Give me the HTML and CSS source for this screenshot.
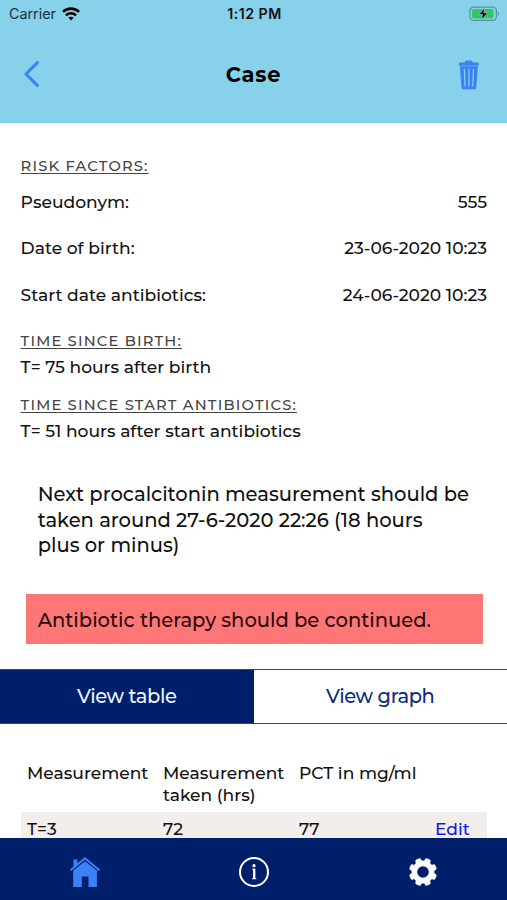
FILE: index.html
```html
<!DOCTYPE html>
<html lang="en">
<head>
    <meta charset="UTF-8">
    <meta name="viewport" content="width=device-width, initial-scale=1.0">
    <title>Case</title>
    <link rel="stylesheet" href="styles.css">
</head>
<body>
    <header class="header">
        <div class="status-bar">
            <div class="carrier">
                <span>Carrier</span>
                <svg class="wifi" viewBox="0 0 18 14" width="18" height="14">
                    <path d="M0.9 4.9 C5.5 0.4 12.5 0.4 17.1 4.9" fill="none" stroke="#000" stroke-width="2.7"/>
                    <path d="M3.9 8.3 C6.8 5.6 11.2 5.6 14.1 8.3" fill="none" stroke="#000" stroke-width="2.4"/>
                    <path d="M9 13.4 L6.3 10.6 C7.8 9.3 10.2 9.3 11.7 10.6 Z" fill="#000"/>
                </svg>
            </div>
            <span class="time">1:12 PM</span>
            <div class="battery">
                <svg viewBox="0 0 31 16" width="31" height="16">
                    <rect x="1" y="1.2" width="26.4" height="13.2" rx="3.6" fill="none" stroke="#5d91a6" stroke-width="1.2"/>
                    <path d="M28.8 5.5 C30.4 6.2 30.4 9.4 28.8 10.1 Z" fill="#5d91a6"/>
                    <rect x="3" y="3.1" width="21.4" height="9.4" rx="2" fill="#35c759"/>
                    <path d="M15.8 1.8 L9.6 8.6 H13.5 L12.4 13.8 L18.8 6.9 H14.8 Z" fill="#000" stroke="#87d1eb" stroke-width="0.7"/>
                </svg>
            </div>
        </div>
        <div class="title-bar">
            <a class="back" href="#" aria-label="Back">
                <svg viewBox="0 0 16 26" width="16" height="26">
                    <path d="M13.3 1.7 L2 13 L13.3 24.3" fill="none" stroke="#3b82f8" stroke-width="3.1" stroke-linecap="round" stroke-linejoin="round"/>
                </svg>
            </a>
            <h1>Case</h1>
            <a class="trash" href="#" aria-label="Delete">
                <svg viewBox="0 0 22 30" width="22" height="30">
                    <path d="M1 3.2 Q1 2.6 1.8 2.6 H6.6 Q7 0.6 8.6 0.6 H13 Q14.6 0.6 15 2.6 H19.8 Q20.7 2.6 20.7 3.4 V5.8 H1 Z" fill="#3b82f8"/>
                    <path d="M1.8 6.3 H19.9 L18.2 28 Q18.1 29.3 16.7 29.3 H5 Q3.7 29.3 3.5 28 Z" fill="#3b82f8"/>
                    <path d="M6.3 9 L7.1 26 M10.9 9 V26 M15.5 9 L14.7 26" fill="none" stroke="#87d1eb" stroke-width="1.2" stroke-linecap="round"/>
                </svg>
            </a>
        </div>
    </header>

    <main class="content">
        <section class="details">
            <h2>RISK FACTORS:</h2>
            <div class="row">
                <span>Pseudonym:</span>
                <span>555</span>
            </div>
            <div class="row">
                <span>Date of birth:</span>
                <span>23-06-2020 10:23</span>
            </div>
            <div class="row">
                <span>Start date antibiotics:</span>
                <span>24-06-2020 10:23</span>
            </div>
            <div class="since">
                <h2>TIME SINCE BIRTH:</h2>
                <p>T= 75 hours after birth</p>
            </div>
            <div class="since">
                <h2>TIME SINCE START ANTIBIOTICS:</h2>
                <p>T= 51 hours after start antibiotics</p>
            </div>
        </section>

        <p class="next">Next procalcitonin measurement should be<br>taken around 27-6-2020 22:26 (18 hours<br>plus or minus)</p>
        <p class="alert">Antibiotic therapy should be continued.</p>

        <div class="tabs">
            <a class="tab active" href="#">View table</a>
            <a class="tab" href="#">View graph</a>
        </div>

        <div class="table">
            <div class="table-row table-head">
                <span>Measurement</span>
                <span>Measurement taken (hrs)</span>
                <span>PCT in mg/ml</span>
                <span></span>
            </div>
            <div class="table-row table-data">
                <span>T=3</span>
                <span>72</span>
                <span>77</span>
                <a href="#">Edit</a>
            </div>
        </div>
    </main>

    <nav class="bottom-nav">
        <a href="#" aria-label="Home">
            <svg viewBox="0 0 32 32" width="32" height="32">
                <path d="M4.5 3.5 H8.4 V8 L4.5 11.6 Z" fill="#3b82f8"/>
                <path d="M1.6 14.2 L16 2.3 L30.4 14.2" fill="none" stroke="#3b82f8" stroke-width="2"/>
                <path d="M4.2 14.6 L16 5.2 L27.9 14.6 V31 H19.5 V20.4 H12.8 V31 H4.2 Z" fill="#3b82f8"/>
            </svg>
        </a>
        <a href="#" aria-label="Information">
            <svg viewBox="0 0 32 32" width="32" height="32">
                <circle cx="16" cy="16" r="14" fill="none" stroke="#fff" stroke-width="2"/>
                <circle cx="16" cy="9.7" r="1.6" fill="#fff"/>
                <path d="M14.2 13.3 H17 M14 22.7 H18.3" fill="none" stroke="#fff" stroke-width="1.1"/>
                <path d="M16.2 12.8 V23" stroke="#fff" stroke-width="2.3"/>
            </svg>
        </a>
        <a href="#" aria-label="Settings">
            <svg viewBox="-16 -16 32 32" width="32" height="32">
                <g fill="#fff">
                    <circle r="11.4"/>
                    <rect x="-3.1" y="-14" width="6.2" height="28" rx="1.8" transform="rotate(22.5)"/>
                    <rect x="-3.1" y="-14" width="6.2" height="28" rx="1.8" transform="rotate(67.5)"/>
                    <rect x="-3.1" y="-14" width="6.2" height="28" rx="1.8" transform="rotate(112.5)"/>
                    <rect x="-3.1" y="-14" width="6.2" height="28" rx="1.8" transform="rotate(157.5)"/>
                </g>
                <circle r="5.8" fill="#001f6b"/>
            </svg>
        </a>
    </nav>
</body>
</html>
```
FILE: styles.css
```css
* {
    box-sizing: border-box;
}
body {
    display: flex;
    flex-direction: column;
    height: 900px;
    margin: 0;
    overflow: hidden;
    background-color: #fff;
    color: #111;
    font-family: Montserrat, Inter, "Liberation Sans", sans-serif;
    font-size: 17.1px;
    font-weight: 500;
}
h1, h2, p {
    margin: 0;
}
a {
    text-decoration: none;
}
svg {
    display: block;
}

/* header */
.header {
    flex: none;
    height: 123px;
    background-color: #87d1eb;
    border-bottom: 1px solid #7fc8e3;
}
.status-bar {
    display: grid;
    grid-template-columns: 1fr auto 1fr;
    align-items: center;
    height: 27px;
    padding: 0 7px 0 9px;
    font-family: Inter, sans-serif;
    font-size: 14px;
}
.carrier {
    display: flex;
    align-items: center;
    gap: 6px;
    font-size: 14.3px;
    font-weight: 400;
    color: #18323c;
}
.time {
    font-size: 14.2px;
    font-weight: 600;
    letter-spacing: 0.5px;
}
.battery {
    justify-self: end;
}
.title-bar {
    display: grid;
    grid-template-columns: 1fr auto 1fr;
    align-items: center;
    height: 94px;
    padding: 0 27px 0 24px;
}
.title-bar h1 {
    padding-left: 3px;
    color: #000;
    font-size: 21px;
    font-weight: 700;
    letter-spacing: 0.8px;
}
.trash {
    justify-self: end;
    padding-top: 1px;
}

/* content */
.content {
    flex: 1;
    min-height: 0;
    overflow: hidden;
}
.details {
    padding: 31px 20px 0 20.6px;
}
.details h2 {
    color: #444;
    font-size: 14.7px;
    font-weight: 500;
    line-height: 24px;
    letter-spacing: 1.2px;
    text-decoration: underline;
    text-decoration-thickness: 1px;
    text-underline-offset: 2px;
}
.row {
    display: flex;
    align-items: center;
    justify-content: space-between;
    height: 46.5px;
}
.since {
    margin-top: 11.5px;
}
.since p {
    line-height: 28px;
}
.next {
    padding: 37.4px 20px 0 37.7px;
    font-size: 19.55px;
    line-height: 25.8px;
}
.alert {
    margin: 35.2px 24.5px 0 25.5px;
    padding: 2px 12.2px 0;
    background-color: #ff7676;
    color: #260a0a;
    font-size: 19.55px;
    line-height: 48px;
}

/* tabs */
.tabs {
    display: flex;
    height: 55px;
    margin-top: 24.2px;
    border: 1px solid #2b4488;
    border-width: 1px 0;
}
.tab {
    flex: 1;
    color: #0d2c77;
    font-size: 19.5px;
    line-height: 52px;
    letter-spacing: -0.4px;
    text-align: center;
}
.tab.active {
    background-color: #001f6b;
    color: #eef2ff;
}

/* table */
.table {
    padding: 38px 20px 0 21px;
}
.table-row {
    display: grid;
    grid-template-columns: 136px 136px 136px 1fr;
    padding-left: 6px;
    line-height: 22px;
}
.table-head {
    height: 50px;
}
.table-data {
    height: 46px;
    padding-top: 6px;
    background-color: #f1eeeb;
}
.table-data a {
    color: #1414f0;
}

/* bottom navigation */
.bottom-nav {
    display: grid;
    grid-template-columns: repeat(3, 1fr);
    align-items: center;
    justify-items: center;
    flex: none;
    height: 62px;
    padding-top: 5px;
    background-color: #001f6b;
}
```
